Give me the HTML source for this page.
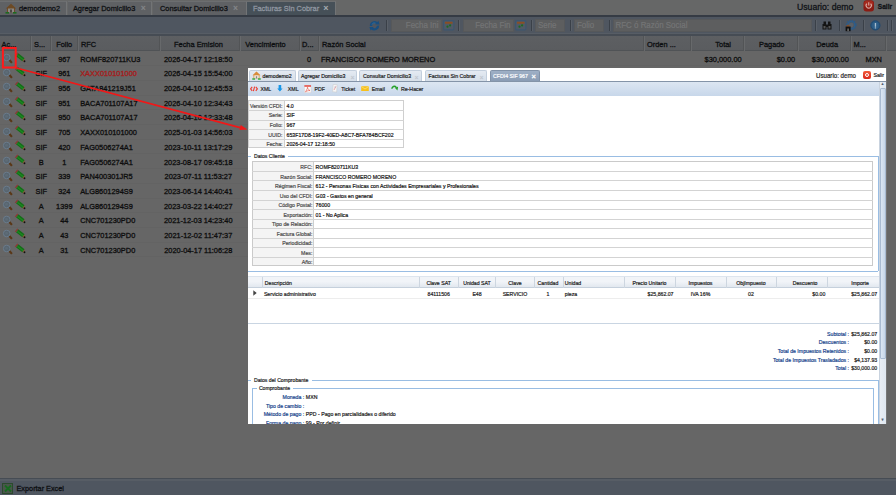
<!DOCTYPE html><html><head><meta charset="utf-8"><style>
html,body{margin:0;padding:0;width:896px;height:495px;overflow:hidden;background:#666;}
body{position:relative;font-family:"Liberation Sans", sans-serif;}
div{position:absolute;}
.t{white-space:nowrap;}
</style></head><body>
<div style="left:0px;top:0px;width:896px;height:14.6px;background:#666767;"></div>
<div style="left:0px;top:14.6px;width:896px;height:2px;background:#353b44;"></div>
<div style="left:0px;top:0.5px;width:66.5px;height:14.1px;background:#5f6164;border-right:1.4px solid #727476;border-top:0.6px solid #6c6e70;box-sizing:border-box;"></div>
<div style="left:67.5px;top:0.5px;width:84.5px;height:14.1px;background:#5f6164;border-right:1.4px solid #727476;border-top:0.6px solid #6c6e70;box-sizing:border-box;"></div>
<div style="left:153px;top:0.5px;width:93.5px;height:14.1px;background:#5f6164;border-right:1.4px solid #727476;border-top:0.6px solid #6c6e70;box-sizing:border-box;"></div>
<div style="left:247px;top:0.5px;width:89px;height:14.1px;background:#465058;border-right:1.4px solid #727476;border-top:0.6px solid #6c6e70;box-sizing:border-box;"></div>
<div style="left:0px;top:16.6px;width:896px;height:16.4px;background:#4f5660;"></div>
<div style="left:0px;top:33px;width:896px;height:1px;background:#575d65;"></div>
<div style="left:0px;top:34px;width:896px;height:1.5px;background:#464c54;"></div>
<div style="left:0px;top:35.5px;width:896px;height:15px;background:linear-gradient(#5d5f62,#5a5c5f);"></div>
<div style="left:0px;top:50.3px;width:896px;height:0.8px;background:#505356;"></div>
<div style="left:0px;top:51px;width:896px;height:426.5px;background:#666;"></div>
<div style="left:0px;top:477.6px;width:896px;height:1.2px;background:#464c54;"></div>
<div style="left:0px;top:478.8px;width:896px;height:2.6px;background:#575d65;"></div>
<div style="left:0px;top:481.4px;width:896px;height:13.6px;background:#4f5660;"></div>
<div class="t" style="top:4.80px;font-size:7.4px;line-height:7.4px;color:#0f1114;font-weight:normal;-webkit-text-stroke:0.28px currentColor;transform:scaleY(1.08);transform-origin:50% 50%;left:19px;">demodemo2</div>
<div class="t" style="top:4.80px;font-size:7.4px;line-height:7.4px;color:#0f1114;font-weight:normal;-webkit-text-stroke:0.28px currentColor;transform:scaleY(1.08);transform-origin:50% 50%;left:72.9px;">Agregar Domicilio3</div>
<div class="t" style="top:4.25px;font-size:8.5px;line-height:8.5px;color:#85878a;font-weight:normal;-webkit-text-stroke:0.28px currentColor;transform:scaleY(1.08);transform-origin:50% 50%;left:140.7px;">&#215;</div>
<div class="t" style="top:4.80px;font-size:7.4px;line-height:7.4px;color:#0f1114;font-weight:normal;-webkit-text-stroke:0.28px currentColor;transform:scaleY(1.08);transform-origin:50% 50%;left:160px;">Consultar Domicilio3</div>
<div class="t" style="top:4.25px;font-size:8.5px;line-height:8.5px;color:#85878a;font-weight:normal;-webkit-text-stroke:0.28px currentColor;transform:scaleY(1.08);transform-origin:50% 50%;left:233px;">&#215;</div>
<div class="t" style="top:4.80px;font-size:7.4px;line-height:7.4px;color:#8f96a0;font-weight:normal;-webkit-text-stroke:0.28px currentColor;transform:scaleY(1.08);transform-origin:50% 50%;left:253px;">Facturas Sin Cobrar</div>
<div class="t" style="top:4.00px;font-size:9px;line-height:9px;color:#a6acb3;font-weight:normal;-webkit-text-stroke:0.28px currentColor;transform:scaleY(1.08);transform-origin:50% 50%;left:323.3px;">&#215;</div>
<svg style="position:absolute;left:4.5px;top:2.5px" width="12" height="11" viewBox="0 0 12 11"><path d="M6 0.8 L0.8 5.6 L2 5.6 L2 9.5 L10 9.5 L10 5.6 L11.2 5.6 Z" fill="#6d4a24"/><rect x="3" y="5.5" width="6" height="4" fill="#8a8783"/><rect x="5" y="6.5" width="2" height="3" fill="#4a4643"/><rect x="0.5" y="9" width="3.5" height="1.6" fill="#1e6a20"/><rect x="8" y="9" width="3.5" height="1.6" fill="#1e6a20"/></svg>
<div class="t" style="top:2.67px;font-size:8.67px;line-height:8.67px;color:#101317;font-weight:normal;-webkit-text-stroke:0.28px currentColor;transform:scaleY(1.08);transform-origin:50% 50%;left:797px;">Usuario: demo</div>
<svg style="position:absolute;left:862.5px;top:0px" width="11.5" height="12" viewBox="0 0 11.5 12"><rect x="0.5" y="0.3" width="10.5" height="11.3" rx="3" fill="#8a1c14"/><rect x="1.2" y="0.8" width="9" height="6" rx="2.5" fill="#a42a1e"/><path d="M3.9 3.6 A2.6 2.6 0 1 0 7.6 3.6" stroke="#d8a8a0" stroke-width="1.1" fill="none"/><path d="M5.75 2.3 V5.6" stroke="#d8a8a0" stroke-width="1.1"/></svg>
<div class="t" style="top:3.70px;font-size:6.6px;line-height:6.6px;color:#101317;font-weight:bold;-webkit-text-stroke:0.28px currentColor;transform:scaleY(1.08);transform-origin:50% 50%;left:877.8px;">Salir</div>
<svg style="position:absolute;left:368.5px;top:19.5px" width="11" height="11" viewBox="0 0 11 11"><path d="M2 6 A3.6 3.6 0 0 1 8.2 3.3" stroke="#1a4f80" stroke-width="2.3" fill="none"/><path d="M6.3 4.6 L10.6 4.6 L9.4 0.8Z" fill="#1a4f80"/><path d="M9 5.6 A3.6 3.6 0 0 1 2.8 8.2" stroke="#1a4f80" stroke-width="2.3" fill="none"/><path d="M4.7 7 L0.4 7 L1.6 10.4Z" fill="#1a4f80"/><path d="M3 4.6 A2.6 2.6 0 0 1 6.4 3" stroke="#3a78a8" stroke-width="0.6" fill="none"/></svg>
<div style="left:385.5px;top:20px;width:1px;height:11px;background:#3a4048;border-right:0.6px solid #5a6068;"></div>
<div style="left:390.5px;top:19px;width:51.0px;height:13px;background:#5d5e5f;border:1px solid #56585a;box-sizing:border-box;"></div>
<div class="t" style="top:21.72px;font-size:7.95px;line-height:7.95px;color:#747576;font-weight:normal;-webkit-text-stroke:0.28px currentColor;transform:scaleY(1.08);transform-origin:50% 50%;right:457.5px;text-align:right;-webkit-text-stroke:0.2px #747576;">Fecha Ini</div>
<svg style="position:absolute;left:443.0px;top:20px" width="11.5" height="10.5" viewBox="0 0 11.5 10.5"><rect x="0.6" y="0.6" width="10.3" height="9.3" rx="1.2" fill="#505a66" stroke="#3c5670" stroke-width="1.1"/><rect x="2" y="1.8" width="7.5" height="1.9" fill="#8a4e24"/><circle cx="4.5" cy="6.7" r="1.1" fill="#1d6a22"/><circle cx="7.1" cy="5.4" r="1.1" fill="#1d6a22"/></svg>
<div style="left:458px;top:20px;width:1px;height:11px;background:#3a4048;border-right:0.6px solid #5a6068;"></div>
<div style="left:463px;top:19px;width:50.5px;height:13px;background:#5d5e5f;border:1px solid #56585a;box-sizing:border-box;"></div>
<div class="t" style="top:21.72px;font-size:7.95px;line-height:7.95px;color:#747576;font-weight:normal;-webkit-text-stroke:0.28px currentColor;transform:scaleY(1.08);transform-origin:50% 50%;right:385.5px;text-align:right;-webkit-text-stroke:0.2px #747576;">Fecha Fin</div>
<svg style="position:absolute;left:515.0px;top:20px" width="11.5" height="10.5" viewBox="0 0 11.5 10.5"><rect x="0.6" y="0.6" width="10.3" height="9.3" rx="1.2" fill="#505a66" stroke="#3c5670" stroke-width="1.1"/><rect x="2" y="1.8" width="7.5" height="1.9" fill="#8a4e24"/><circle cx="4.5" cy="6.7" r="1.1" fill="#1d6a22"/><circle cx="7.1" cy="5.4" r="1.1" fill="#1d6a22"/></svg>
<div style="left:530.5px;top:20px;width:1px;height:11px;background:#3a4048;border-right:0.6px solid #5a6068;"></div>
<div style="left:535px;top:19px;width:30px;height:13px;background:#5d5e5f;border:1px solid #56585a;box-sizing:border-box;"></div>
<div class="t" style="top:21.72px;font-size:7.95px;line-height:7.95px;color:#747576;font-weight:normal;-webkit-text-stroke:0.28px currentColor;transform:scaleY(1.08);transform-origin:50% 50%;left:538px;-webkit-text-stroke:0.2px #747576;">Serie</div>
<div style="left:570px;top:20px;width:1px;height:11px;background:#3a4048;border-right:0.6px solid #5a6068;"></div>
<div style="left:574px;top:19px;width:29.5px;height:13px;background:#5d5e5f;border:1px solid #56585a;box-sizing:border-box;"></div>
<div class="t" style="top:21.72px;font-size:7.95px;line-height:7.95px;color:#747576;font-weight:normal;-webkit-text-stroke:0.28px currentColor;transform:scaleY(1.08);transform-origin:50% 50%;left:577px;-webkit-text-stroke:0.2px #747576;">Folio</div>
<div style="left:608.5px;top:20px;width:1px;height:11px;background:#3a4048;border-right:0.6px solid #5a6068;"></div>
<div style="left:612.5px;top:19px;width:199.0px;height:13px;background:#5d5e5f;border:1px solid #56585a;box-sizing:border-box;"></div>
<div class="t" style="top:21.72px;font-size:7.95px;line-height:7.95px;color:#747576;font-weight:normal;-webkit-text-stroke:0.28px currentColor;transform:scaleY(1.08);transform-origin:50% 50%;left:615.5px;-webkit-text-stroke:0.2px #747576;">RFC &#243; Raz&#243;n Social</div>
<div style="left:814.5px;top:20px;width:1px;height:11px;background:#3a4048;border-right:0.6px solid #5a6068;"></div>
<svg style="position:absolute;left:822px;top:21px" width="10" height="9" viewBox="0 0 10 9"><rect x="0.5" y="3" width="4" height="5.5" fill="#141414"/><rect x="5.5" y="3" width="4" height="5.5" fill="#141414"/><rect x="1.5" y="0.5" width="2.5" height="3" fill="#141414"/><rect x="6" y="0.5" width="2.5" height="3" fill="#141414"/><rect x="4" y="4" width="2" height="2" fill="#141414"/><rect x="1.5" y="5" width="2" height="2.5" fill="#555"/><rect x="6.5" y="5" width="2" height="2.5" fill="#555"/></svg>
<div style="left:838.5px;top:20px;width:1px;height:11px;background:#3a4048;border-right:0.6px solid #5a6068;"></div>
<svg style="position:absolute;left:844px;top:18.5px" width="14" height="14" viewBox="0 0 14 14"><circle cx="7.3" cy="6" r="4.6" fill="none" stroke="#2b5a88" stroke-width="1.6" stroke-dasharray="1.3 1.1"/><circle cx="7.3" cy="6" r="3.4" fill="none" stroke="#2e5d8a" stroke-width="1.4"/><circle cx="7.3" cy="6" r="2.2" fill="#5a6068"/><path d="M1.3 7.8 L4 5.6 L6.8 7.8 Z" fill="#8a4e22"/><rect x="1.6" y="7.6" width="5" height="4.6" fill="#101010"/><rect x="3.3" y="9.5" width="1.6" height="2.7" fill="#6a6a6a"/></svg>
<div style="left:862.5px;top:20px;width:1px;height:11px;background:#3a4048;border-right:0.6px solid #5a6068;"></div>
<svg style="position:absolute;left:869.5px;top:19.5px" width="11" height="11" viewBox="0 0 11 11"><circle cx="5.4" cy="5.4" r="4.6" fill="#2a5880" stroke="#1d4870" stroke-width="1"/><circle cx="5.4" cy="5.4" r="3.2" fill="#2f5f88"/><rect x="4.8" y="3" width="1.3" height="3.8" fill="#a8bccd"/><rect x="4.8" y="7.3" width="1.3" height="1.2" fill="#a8bccd"/></svg>
<div style="left:886.5px;top:20px;width:1px;height:11px;background:#3a4048;border-right:0.6px solid #5a6068;"></div>
<div style="left:890.5px;top:20px;width:1px;height:11px;background:#3a4048;border-right:0.6px solid #5a6068;"></div>
<div style="left:30.2px;top:36px;width:1px;height:14.5px;background:#525456;border-right:1px solid #67696b;"></div>
<div style="left:50.3px;top:36px;width:1px;height:14.5px;background:#525456;border-right:1px solid #67696b;"></div>
<div style="left:77.1px;top:36px;width:1px;height:14.5px;background:#525456;border-right:1px solid #67696b;"></div>
<div style="left:158.5px;top:36px;width:1px;height:14.5px;background:#525456;border-right:1px solid #67696b;"></div>
<div style="left:238.8px;top:36px;width:1px;height:14.5px;background:#525456;border-right:1px solid #67696b;"></div>
<div style="left:299.1px;top:36px;width:1px;height:14.5px;background:#525456;border-right:1px solid #67696b;"></div>
<div style="left:318.1px;top:36px;width:1px;height:14.5px;background:#525456;border-right:1px solid #67696b;"></div>
<div style="left:642.6px;top:36px;width:1px;height:14.5px;background:#525456;border-right:1px solid #67696b;"></div>
<div style="left:689.7px;top:36px;width:1px;height:14.5px;background:#525456;border-right:1px solid #67696b;"></div>
<div style="left:743.3px;top:36px;width:1px;height:14.5px;background:#525456;border-right:1px solid #67696b;"></div>
<div style="left:796.6px;top:36px;width:1px;height:14.5px;background:#525456;border-right:1px solid #67696b;"></div>
<div style="left:849.9px;top:36px;width:1px;height:14.5px;background:#525456;border-right:1px solid #67696b;"></div>
<div style="left:884.6px;top:36px;width:1px;height:14.5px;background:#525456;border-right:1px solid #67696b;"></div>
<div class="t" style="top:40.79px;font-size:7.42px;line-height:7.42px;color:#0c0e10;font-weight:normal;-webkit-text-stroke:0.28px currentColor;transform:scaleY(1.08);transform-origin:50% 50%;left:1.5px;">Ac...</div>
<div class="t" style="top:40.79px;font-size:7.42px;line-height:7.42px;color:#0c0e10;font-weight:normal;-webkit-text-stroke:0.28px currentColor;transform:scaleY(1.08);transform-origin:50% 50%;left:34px;">S...</div>
<div class="t" style="top:40.79px;font-size:7.42px;line-height:7.42px;color:#0c0e10;font-weight:normal;-webkit-text-stroke:0.28px currentColor;transform:scaleY(1.08);transform-origin:50% 50%;left:-85.8px;width:300px;text-align:center;">Folio</div>
<div class="t" style="top:40.79px;font-size:7.42px;line-height:7.42px;color:#0c0e10;font-weight:normal;-webkit-text-stroke:0.28px currentColor;transform:scaleY(1.08);transform-origin:50% 50%;left:81px;">RFC</div>
<div class="t" style="top:40.79px;font-size:7.42px;line-height:7.42px;color:#0c0e10;font-weight:normal;-webkit-text-stroke:0.28px currentColor;transform:scaleY(1.08);transform-origin:50% 50%;left:48.5px;width:300px;text-align:center;">Fecha Emision</div>
<div class="t" style="top:40.79px;font-size:7.42px;line-height:7.42px;color:#0c0e10;font-weight:normal;-webkit-text-stroke:0.28px currentColor;transform:scaleY(1.08);transform-origin:50% 50%;left:115.5px;width:300px;text-align:center;">Vencimiento</div>
<div class="t" style="top:40.79px;font-size:7.42px;line-height:7.42px;color:#0c0e10;font-weight:normal;-webkit-text-stroke:0.28px currentColor;transform:scaleY(1.08);transform-origin:50% 50%;left:302px;">D...</div>
<div class="t" style="top:40.79px;font-size:7.42px;line-height:7.42px;color:#0c0e10;font-weight:normal;-webkit-text-stroke:0.28px currentColor;transform:scaleY(1.08);transform-origin:50% 50%;left:322px;">Raz&#243;n Social</div>
<div class="t" style="top:40.79px;font-size:7.42px;line-height:7.42px;color:#0c0e10;font-weight:normal;-webkit-text-stroke:0.28px currentColor;transform:scaleY(1.08);transform-origin:50% 50%;left:647px;">Orden ...</div>
<div class="t" style="top:40.79px;font-size:7.42px;line-height:7.42px;color:#0c0e10;font-weight:normal;-webkit-text-stroke:0.28px currentColor;transform:scaleY(1.08);transform-origin:50% 50%;right:165px;text-align:right;">Total</div>
<div class="t" style="top:40.79px;font-size:7.42px;line-height:7.42px;color:#0c0e10;font-weight:normal;-webkit-text-stroke:0.28px currentColor;transform:scaleY(1.08);transform-origin:50% 50%;right:111.5px;text-align:right;">Pagado</div>
<div class="t" style="top:40.79px;font-size:7.42px;line-height:7.42px;color:#0c0e10;font-weight:normal;-webkit-text-stroke:0.28px currentColor;transform:scaleY(1.08);transform-origin:50% 50%;right:58px;text-align:right;">Deuda</div>
<div class="t" style="top:40.79px;font-size:7.42px;line-height:7.42px;color:#0c0e10;font-weight:normal;-webkit-text-stroke:0.28px currentColor;transform:scaleY(1.08);transform-origin:50% 50%;left:853.5px;">M...</div>
<div style="left:0px;top:65.2px;width:884.4px;height:0.7px;background:#636363;"></div>
<svg style="position:absolute;left:2px;top:51.00px" width="12" height="14" viewBox="0 0 12 14"><path d="M7.4 9 L9.4 11.2" stroke="#5a3818" stroke-width="2.1" stroke-linecap="round"/><circle cx="4.7" cy="6.5" r="3.3" fill="#58656f" stroke="#6a7b8c" stroke-width="1"/><circle cx="4.5" cy="6.3" r="1.5" fill="#5e6c78"/></svg>
<svg style="position:absolute;left:14.2px;top:51.50px" width="14" height="12" viewBox="0 0 14 12"><path d="M2.0 4.3 L4.3 1.3 L10.6 6.2 L8.3 9.2Z" fill="#146e18"/><path d="M3.3 3.2 L9.3 7.8" stroke="#1d8a21" stroke-width="1.1"/><path d="M0.9 3.4 L3.2 0.4 L4.3 1.3 L2.0 4.3Z" fill="#8a3a36"/><path d="M10.6 6.2 L8.3 9.2 L10.9 9.6Z" fill="#8a5e36"/><circle cx="10.5" cy="9.2" r="0.95" fill="#111"/></svg>
<div class="t" style="top:55.60px;font-size:7.4px;line-height:7.4px;color:#0d0d0d;font-weight:normal;-webkit-text-stroke:0.28px currentColor;transform:scaleY(1.08);transform-origin:50% 50%;left:-108.8px;width:300px;text-align:center;">SIF</div>
<div class="t" style="top:55.60px;font-size:7.4px;line-height:7.4px;color:#0d0d0d;font-weight:normal;-webkit-text-stroke:0.28px currentColor;transform:scaleY(1.08);transform-origin:50% 50%;left:-85.7px;width:300px;text-align:center;">967</div>
<div class="t" style="top:55.60px;font-size:7.4px;line-height:7.4px;color:#0d0d0d;font-weight:normal;-webkit-text-stroke:0.28px currentColor;transform:scaleY(1.08);transform-origin:50% 50%;left:80.2px;">ROMF820711KU3</div>
<div class="t" style="top:55.60px;font-size:7.4px;line-height:7.4px;color:#0d0d0d;font-weight:normal;-webkit-text-stroke:0.28px currentColor;transform:scaleY(1.08);transform-origin:50% 50%;left:48.30000000000001px;width:300px;text-align:center;">2026-04-17 12:18:50</div>
<div class="t" style="top:55.60px;font-size:7.4px;line-height:7.4px;color:#0d0d0d;font-weight:normal;-webkit-text-stroke:0.28px currentColor;transform:scaleY(1.08);transform-origin:50% 50%;left:159px;width:300px;text-align:center;">0</div>
<div class="t" style="top:55.60px;font-size:7.4px;line-height:7.4px;color:#0d0d0d;font-weight:normal;-webkit-text-stroke:0.28px currentColor;transform:scaleY(1.08);transform-origin:50% 50%;left:321px;">FRANCISCO ROMERO MORENO</div>
<div class="t" style="top:55.60px;font-size:7.4px;line-height:7.4px;color:#0d0d0d;font-weight:normal;-webkit-text-stroke:0.28px currentColor;transform:scaleY(1.08);transform-origin:50% 50%;right:154.39999999999998px;text-align:right;">$30,000.00</div>
<div class="t" style="top:55.60px;font-size:7.4px;line-height:7.4px;color:#0d0d0d;font-weight:normal;-webkit-text-stroke:0.28px currentColor;transform:scaleY(1.08);transform-origin:50% 50%;right:100.79999999999995px;text-align:right;">$0.00</div>
<div class="t" style="top:55.60px;font-size:7.4px;line-height:7.4px;color:#0d0d0d;font-weight:normal;-webkit-text-stroke:0.28px currentColor;transform:scaleY(1.08);transform-origin:50% 50%;right:47.200000000000045px;text-align:right;">$30,000.00</div>
<div class="t" style="top:55.60px;font-size:7.4px;line-height:7.4px;color:#0d0d0d;font-weight:normal;-webkit-text-stroke:0.28px currentColor;transform:scaleY(1.08);transform-origin:50% 50%;left:865.5px;">MXN</div>
<div style="left:0px;top:79.9px;width:884.4px;height:0.7px;background:#636363;"></div>
<svg style="position:absolute;left:2px;top:65.70px" width="12" height="14" viewBox="0 0 12 14"><path d="M7.4 9 L9.4 11.2" stroke="#5a3818" stroke-width="2.1" stroke-linecap="round"/><circle cx="4.7" cy="6.5" r="3.3" fill="#58656f" stroke="#6a7b8c" stroke-width="1"/><circle cx="4.5" cy="6.3" r="1.5" fill="#5e6c78"/></svg>
<svg style="position:absolute;left:14.2px;top:66.20px" width="14" height="12" viewBox="0 0 14 12"><path d="M2.0 4.3 L4.3 1.3 L10.6 6.2 L8.3 9.2Z" fill="#146e18"/><path d="M3.3 3.2 L9.3 7.8" stroke="#1d8a21" stroke-width="1.1"/><path d="M0.9 3.4 L3.2 0.4 L4.3 1.3 L2.0 4.3Z" fill="#8a3a36"/><path d="M10.6 6.2 L8.3 9.2 L10.9 9.6Z" fill="#8a5e36"/><circle cx="10.5" cy="9.2" r="0.95" fill="#111"/></svg>
<div class="t" style="top:70.30px;font-size:7.4px;line-height:7.4px;color:#0d0d0d;font-weight:normal;-webkit-text-stroke:0.28px currentColor;transform:scaleY(1.08);transform-origin:50% 50%;left:-108.8px;width:300px;text-align:center;">SIF</div>
<div class="t" style="top:70.30px;font-size:7.4px;line-height:7.4px;color:#0d0d0d;font-weight:normal;-webkit-text-stroke:0.28px currentColor;transform:scaleY(1.08);transform-origin:50% 50%;left:-85.7px;width:300px;text-align:center;">961</div>
<div class="t" style="top:70.30px;font-size:7.4px;line-height:7.4px;color:#a81a1a;font-weight:normal;-webkit-text-stroke:0.28px currentColor;transform:scaleY(1.08);transform-origin:50% 50%;left:80.2px;">XAXX010101000</div>
<div class="t" style="top:70.30px;font-size:7.4px;line-height:7.4px;color:#0d0d0d;font-weight:normal;-webkit-text-stroke:0.28px currentColor;transform:scaleY(1.08);transform-origin:50% 50%;left:48.30000000000001px;width:300px;text-align:center;">2026-04-15 15:54:00</div>
<div style="left:0px;top:94.60000000000001px;width:884.4px;height:0.7px;background:#636363;"></div>
<svg style="position:absolute;left:2px;top:80.40px" width="12" height="14" viewBox="0 0 12 14"><path d="M7.4 9 L9.4 11.2" stroke="#5a3818" stroke-width="2.1" stroke-linecap="round"/><circle cx="4.7" cy="6.5" r="3.3" fill="#58656f" stroke="#6a7b8c" stroke-width="1"/><circle cx="4.5" cy="6.3" r="1.5" fill="#5e6c78"/></svg>
<svg style="position:absolute;left:14.2px;top:80.90px" width="14" height="12" viewBox="0 0 14 12"><path d="M2.0 4.3 L4.3 1.3 L10.6 6.2 L8.3 9.2Z" fill="#146e18"/><path d="M3.3 3.2 L9.3 7.8" stroke="#1d8a21" stroke-width="1.1"/><path d="M0.9 3.4 L3.2 0.4 L4.3 1.3 L2.0 4.3Z" fill="#8a3a36"/><path d="M10.6 6.2 L8.3 9.2 L10.9 9.6Z" fill="#8a5e36"/><circle cx="10.5" cy="9.2" r="0.95" fill="#111"/></svg>
<div class="t" style="top:85.00px;font-size:7.4px;line-height:7.4px;color:#0d0d0d;font-weight:normal;-webkit-text-stroke:0.28px currentColor;transform:scaleY(1.08);transform-origin:50% 50%;left:-108.8px;width:300px;text-align:center;">SIF</div>
<div class="t" style="top:85.00px;font-size:7.4px;line-height:7.4px;color:#0d0d0d;font-weight:normal;-webkit-text-stroke:0.28px currentColor;transform:scaleY(1.08);transform-origin:50% 50%;left:-85.7px;width:300px;text-align:center;">956</div>
<div class="t" style="top:85.00px;font-size:7.4px;line-height:7.4px;color:#0d0d0d;font-weight:normal;-webkit-text-stroke:0.28px currentColor;transform:scaleY(1.08);transform-origin:50% 50%;left:80.2px;">GATA841219J51</div>
<div class="t" style="top:85.00px;font-size:7.4px;line-height:7.4px;color:#0d0d0d;font-weight:normal;-webkit-text-stroke:0.28px currentColor;transform:scaleY(1.08);transform-origin:50% 50%;left:48.30000000000001px;width:300px;text-align:center;">2026-04-10 12:45:53</div>
<div style="left:0px;top:109.3px;width:884.4px;height:0.7px;background:#636363;"></div>
<svg style="position:absolute;left:2px;top:95.10px" width="12" height="14" viewBox="0 0 12 14"><path d="M7.4 9 L9.4 11.2" stroke="#5a3818" stroke-width="2.1" stroke-linecap="round"/><circle cx="4.7" cy="6.5" r="3.3" fill="#58656f" stroke="#6a7b8c" stroke-width="1"/><circle cx="4.5" cy="6.3" r="1.5" fill="#5e6c78"/></svg>
<svg style="position:absolute;left:14.2px;top:95.60px" width="14" height="12" viewBox="0 0 14 12"><path d="M2.0 4.3 L4.3 1.3 L10.6 6.2 L8.3 9.2Z" fill="#146e18"/><path d="M3.3 3.2 L9.3 7.8" stroke="#1d8a21" stroke-width="1.1"/><path d="M0.9 3.4 L3.2 0.4 L4.3 1.3 L2.0 4.3Z" fill="#8a3a36"/><path d="M10.6 6.2 L8.3 9.2 L10.9 9.6Z" fill="#8a5e36"/><circle cx="10.5" cy="9.2" r="0.95" fill="#111"/></svg>
<div class="t" style="top:99.70px;font-size:7.4px;line-height:7.4px;color:#0d0d0d;font-weight:normal;-webkit-text-stroke:0.28px currentColor;transform:scaleY(1.08);transform-origin:50% 50%;left:-108.8px;width:300px;text-align:center;">SIF</div>
<div class="t" style="top:99.70px;font-size:7.4px;line-height:7.4px;color:#0d0d0d;font-weight:normal;-webkit-text-stroke:0.28px currentColor;transform:scaleY(1.08);transform-origin:50% 50%;left:-85.7px;width:300px;text-align:center;">951</div>
<div class="t" style="top:99.70px;font-size:7.4px;line-height:7.4px;color:#0d0d0d;font-weight:normal;-webkit-text-stroke:0.28px currentColor;transform:scaleY(1.08);transform-origin:50% 50%;left:80.2px;">BACA701107A17</div>
<div class="t" style="top:99.70px;font-size:7.4px;line-height:7.4px;color:#0d0d0d;font-weight:normal;-webkit-text-stroke:0.28px currentColor;transform:scaleY(1.08);transform-origin:50% 50%;left:48.30000000000001px;width:300px;text-align:center;">2026-04-10 12:34:43</div>
<div style="left:0px;top:124.0px;width:884.4px;height:0.7px;background:#636363;"></div>
<svg style="position:absolute;left:2px;top:109.80px" width="12" height="14" viewBox="0 0 12 14"><path d="M7.4 9 L9.4 11.2" stroke="#5a3818" stroke-width="2.1" stroke-linecap="round"/><circle cx="4.7" cy="6.5" r="3.3" fill="#58656f" stroke="#6a7b8c" stroke-width="1"/><circle cx="4.5" cy="6.3" r="1.5" fill="#5e6c78"/></svg>
<svg style="position:absolute;left:14.2px;top:110.30px" width="14" height="12" viewBox="0 0 14 12"><path d="M2.0 4.3 L4.3 1.3 L10.6 6.2 L8.3 9.2Z" fill="#146e18"/><path d="M3.3 3.2 L9.3 7.8" stroke="#1d8a21" stroke-width="1.1"/><path d="M0.9 3.4 L3.2 0.4 L4.3 1.3 L2.0 4.3Z" fill="#8a3a36"/><path d="M10.6 6.2 L8.3 9.2 L10.9 9.6Z" fill="#8a5e36"/><circle cx="10.5" cy="9.2" r="0.95" fill="#111"/></svg>
<div class="t" style="top:114.40px;font-size:7.4px;line-height:7.4px;color:#0d0d0d;font-weight:normal;-webkit-text-stroke:0.28px currentColor;transform:scaleY(1.08);transform-origin:50% 50%;left:-108.8px;width:300px;text-align:center;">SIF</div>
<div class="t" style="top:114.40px;font-size:7.4px;line-height:7.4px;color:#0d0d0d;font-weight:normal;-webkit-text-stroke:0.28px currentColor;transform:scaleY(1.08);transform-origin:50% 50%;left:-85.7px;width:300px;text-align:center;">950</div>
<div class="t" style="top:114.40px;font-size:7.4px;line-height:7.4px;color:#0d0d0d;font-weight:normal;-webkit-text-stroke:0.28px currentColor;transform:scaleY(1.08);transform-origin:50% 50%;left:80.2px;">BACA701107A17</div>
<div class="t" style="top:114.40px;font-size:7.4px;line-height:7.4px;color:#0d0d0d;font-weight:normal;-webkit-text-stroke:0.28px currentColor;transform:scaleY(1.08);transform-origin:50% 50%;left:48.30000000000001px;width:300px;text-align:center;">2026-04-10 12:33:48</div>
<div style="left:0px;top:138.7px;width:884.4px;height:0.7px;background:#636363;"></div>
<svg style="position:absolute;left:2px;top:124.50px" width="12" height="14" viewBox="0 0 12 14"><path d="M7.4 9 L9.4 11.2" stroke="#5a3818" stroke-width="2.1" stroke-linecap="round"/><circle cx="4.7" cy="6.5" r="3.3" fill="#58656f" stroke="#6a7b8c" stroke-width="1"/><circle cx="4.5" cy="6.3" r="1.5" fill="#5e6c78"/></svg>
<svg style="position:absolute;left:14.2px;top:125.00px" width="14" height="12" viewBox="0 0 14 12"><path d="M2.0 4.3 L4.3 1.3 L10.6 6.2 L8.3 9.2Z" fill="#146e18"/><path d="M3.3 3.2 L9.3 7.8" stroke="#1d8a21" stroke-width="1.1"/><path d="M0.9 3.4 L3.2 0.4 L4.3 1.3 L2.0 4.3Z" fill="#8a3a36"/><path d="M10.6 6.2 L8.3 9.2 L10.9 9.6Z" fill="#8a5e36"/><circle cx="10.5" cy="9.2" r="0.95" fill="#111"/></svg>
<div class="t" style="top:129.10px;font-size:7.4px;line-height:7.4px;color:#0d0d0d;font-weight:normal;-webkit-text-stroke:0.28px currentColor;transform:scaleY(1.08);transform-origin:50% 50%;left:-108.8px;width:300px;text-align:center;">SIF</div>
<div class="t" style="top:129.10px;font-size:7.4px;line-height:7.4px;color:#0d0d0d;font-weight:normal;-webkit-text-stroke:0.28px currentColor;transform:scaleY(1.08);transform-origin:50% 50%;left:-85.7px;width:300px;text-align:center;">705</div>
<div class="t" style="top:129.10px;font-size:7.4px;line-height:7.4px;color:#0d0d0d;font-weight:normal;-webkit-text-stroke:0.28px currentColor;transform:scaleY(1.08);transform-origin:50% 50%;left:80.2px;">XAXX010101000</div>
<div class="t" style="top:129.10px;font-size:7.4px;line-height:7.4px;color:#0d0d0d;font-weight:normal;-webkit-text-stroke:0.28px currentColor;transform:scaleY(1.08);transform-origin:50% 50%;left:48.30000000000001px;width:300px;text-align:center;">2025-01-03 14:56:03</div>
<div style="left:0px;top:153.39999999999998px;width:884.4px;height:0.7px;background:#636363;"></div>
<svg style="position:absolute;left:2px;top:139.20px" width="12" height="14" viewBox="0 0 12 14"><path d="M7.4 9 L9.4 11.2" stroke="#5a3818" stroke-width="2.1" stroke-linecap="round"/><circle cx="4.7" cy="6.5" r="3.3" fill="#58656f" stroke="#6a7b8c" stroke-width="1"/><circle cx="4.5" cy="6.3" r="1.5" fill="#5e6c78"/></svg>
<svg style="position:absolute;left:14.2px;top:139.70px" width="14" height="12" viewBox="0 0 14 12"><path d="M2.0 4.3 L4.3 1.3 L10.6 6.2 L8.3 9.2Z" fill="#146e18"/><path d="M3.3 3.2 L9.3 7.8" stroke="#1d8a21" stroke-width="1.1"/><path d="M0.9 3.4 L3.2 0.4 L4.3 1.3 L2.0 4.3Z" fill="#8a3a36"/><path d="M10.6 6.2 L8.3 9.2 L10.9 9.6Z" fill="#8a5e36"/><circle cx="10.5" cy="9.2" r="0.95" fill="#111"/></svg>
<div class="t" style="top:143.80px;font-size:7.4px;line-height:7.4px;color:#0d0d0d;font-weight:normal;-webkit-text-stroke:0.28px currentColor;transform:scaleY(1.08);transform-origin:50% 50%;left:-108.8px;width:300px;text-align:center;">SIF</div>
<div class="t" style="top:143.80px;font-size:7.4px;line-height:7.4px;color:#0d0d0d;font-weight:normal;-webkit-text-stroke:0.28px currentColor;transform:scaleY(1.08);transform-origin:50% 50%;left:-85.7px;width:300px;text-align:center;">420</div>
<div class="t" style="top:143.80px;font-size:7.4px;line-height:7.4px;color:#0d0d0d;font-weight:normal;-webkit-text-stroke:0.28px currentColor;transform:scaleY(1.08);transform-origin:50% 50%;left:80.2px;">FAG0506274A1</div>
<div class="t" style="top:143.80px;font-size:7.4px;line-height:7.4px;color:#0d0d0d;font-weight:normal;-webkit-text-stroke:0.28px currentColor;transform:scaleY(1.08);transform-origin:50% 50%;left:48.30000000000001px;width:300px;text-align:center;">2023-10-11 13:17:29</div>
<div style="left:0px;top:168.09999999999997px;width:884.4px;height:0.7px;background:#636363;"></div>
<svg style="position:absolute;left:2px;top:153.90px" width="12" height="14" viewBox="0 0 12 14"><path d="M7.4 9 L9.4 11.2" stroke="#5a3818" stroke-width="2.1" stroke-linecap="round"/><circle cx="4.7" cy="6.5" r="3.3" fill="#58656f" stroke="#6a7b8c" stroke-width="1"/><circle cx="4.5" cy="6.3" r="1.5" fill="#5e6c78"/></svg>
<svg style="position:absolute;left:14.2px;top:154.40px" width="14" height="12" viewBox="0 0 14 12"><path d="M2.0 4.3 L4.3 1.3 L10.6 6.2 L8.3 9.2Z" fill="#146e18"/><path d="M3.3 3.2 L9.3 7.8" stroke="#1d8a21" stroke-width="1.1"/><path d="M0.9 3.4 L3.2 0.4 L4.3 1.3 L2.0 4.3Z" fill="#8a3a36"/><path d="M10.6 6.2 L8.3 9.2 L10.9 9.6Z" fill="#8a5e36"/><circle cx="10.5" cy="9.2" r="0.95" fill="#111"/></svg>
<div class="t" style="top:158.50px;font-size:7.4px;line-height:7.4px;color:#0d0d0d;font-weight:normal;-webkit-text-stroke:0.28px currentColor;transform:scaleY(1.08);transform-origin:50% 50%;left:-108.8px;width:300px;text-align:center;">B</div>
<div class="t" style="top:158.50px;font-size:7.4px;line-height:7.4px;color:#0d0d0d;font-weight:normal;-webkit-text-stroke:0.28px currentColor;transform:scaleY(1.08);transform-origin:50% 50%;left:-85.7px;width:300px;text-align:center;">1</div>
<div class="t" style="top:158.50px;font-size:7.4px;line-height:7.4px;color:#0d0d0d;font-weight:normal;-webkit-text-stroke:0.28px currentColor;transform:scaleY(1.08);transform-origin:50% 50%;left:80.2px;">FAG0506274A1</div>
<div class="t" style="top:158.50px;font-size:7.4px;line-height:7.4px;color:#0d0d0d;font-weight:normal;-webkit-text-stroke:0.28px currentColor;transform:scaleY(1.08);transform-origin:50% 50%;left:48.30000000000001px;width:300px;text-align:center;">2023-08-17 09:45:18</div>
<div style="left:0px;top:182.79999999999998px;width:884.4px;height:0.7px;background:#636363;"></div>
<svg style="position:absolute;left:2px;top:168.60px" width="12" height="14" viewBox="0 0 12 14"><path d="M7.4 9 L9.4 11.2" stroke="#5a3818" stroke-width="2.1" stroke-linecap="round"/><circle cx="4.7" cy="6.5" r="3.3" fill="#58656f" stroke="#6a7b8c" stroke-width="1"/><circle cx="4.5" cy="6.3" r="1.5" fill="#5e6c78"/></svg>
<svg style="position:absolute;left:14.2px;top:169.10px" width="14" height="12" viewBox="0 0 14 12"><path d="M2.0 4.3 L4.3 1.3 L10.6 6.2 L8.3 9.2Z" fill="#146e18"/><path d="M3.3 3.2 L9.3 7.8" stroke="#1d8a21" stroke-width="1.1"/><path d="M0.9 3.4 L3.2 0.4 L4.3 1.3 L2.0 4.3Z" fill="#8a3a36"/><path d="M10.6 6.2 L8.3 9.2 L10.9 9.6Z" fill="#8a5e36"/><circle cx="10.5" cy="9.2" r="0.95" fill="#111"/></svg>
<div class="t" style="top:173.20px;font-size:7.4px;line-height:7.4px;color:#0d0d0d;font-weight:normal;-webkit-text-stroke:0.28px currentColor;transform:scaleY(1.08);transform-origin:50% 50%;left:-108.8px;width:300px;text-align:center;">SIF</div>
<div class="t" style="top:173.20px;font-size:7.4px;line-height:7.4px;color:#0d0d0d;font-weight:normal;-webkit-text-stroke:0.28px currentColor;transform:scaleY(1.08);transform-origin:50% 50%;left:-85.7px;width:300px;text-align:center;">339</div>
<div class="t" style="top:173.20px;font-size:7.4px;line-height:7.4px;color:#0d0d0d;font-weight:normal;-webkit-text-stroke:0.28px currentColor;transform:scaleY(1.08);transform-origin:50% 50%;left:80.2px;">PAN400301JR5</div>
<div class="t" style="top:173.20px;font-size:7.4px;line-height:7.4px;color:#0d0d0d;font-weight:normal;-webkit-text-stroke:0.28px currentColor;transform:scaleY(1.08);transform-origin:50% 50%;left:48.30000000000001px;width:300px;text-align:center;">2023-07-11 11:53:27</div>
<div style="left:0px;top:197.49999999999997px;width:884.4px;height:0.7px;background:#636363;"></div>
<svg style="position:absolute;left:2px;top:183.30px" width="12" height="14" viewBox="0 0 12 14"><path d="M7.4 9 L9.4 11.2" stroke="#5a3818" stroke-width="2.1" stroke-linecap="round"/><circle cx="4.7" cy="6.5" r="3.3" fill="#58656f" stroke="#6a7b8c" stroke-width="1"/><circle cx="4.5" cy="6.3" r="1.5" fill="#5e6c78"/></svg>
<svg style="position:absolute;left:14.2px;top:183.80px" width="14" height="12" viewBox="0 0 14 12"><path d="M2.0 4.3 L4.3 1.3 L10.6 6.2 L8.3 9.2Z" fill="#146e18"/><path d="M3.3 3.2 L9.3 7.8" stroke="#1d8a21" stroke-width="1.1"/><path d="M0.9 3.4 L3.2 0.4 L4.3 1.3 L2.0 4.3Z" fill="#8a3a36"/><path d="M10.6 6.2 L8.3 9.2 L10.9 9.6Z" fill="#8a5e36"/><circle cx="10.5" cy="9.2" r="0.95" fill="#111"/></svg>
<div class="t" style="top:187.90px;font-size:7.4px;line-height:7.4px;color:#0d0d0d;font-weight:normal;-webkit-text-stroke:0.28px currentColor;transform:scaleY(1.08);transform-origin:50% 50%;left:-108.8px;width:300px;text-align:center;">SIF</div>
<div class="t" style="top:187.90px;font-size:7.4px;line-height:7.4px;color:#0d0d0d;font-weight:normal;-webkit-text-stroke:0.28px currentColor;transform:scaleY(1.08);transform-origin:50% 50%;left:-85.7px;width:300px;text-align:center;">324</div>
<div class="t" style="top:187.90px;font-size:7.4px;line-height:7.4px;color:#0d0d0d;font-weight:normal;-webkit-text-stroke:0.28px currentColor;transform:scaleY(1.08);transform-origin:50% 50%;left:80.2px;">ALG8601294S9</div>
<div class="t" style="top:187.90px;font-size:7.4px;line-height:7.4px;color:#0d0d0d;font-weight:normal;-webkit-text-stroke:0.28px currentColor;transform:scaleY(1.08);transform-origin:50% 50%;left:48.30000000000001px;width:300px;text-align:center;">2023-06-14 14:40:41</div>
<div style="left:0px;top:212.2px;width:884.4px;height:0.7px;background:#636363;"></div>
<svg style="position:absolute;left:2px;top:198.00px" width="12" height="14" viewBox="0 0 12 14"><path d="M7.4 9 L9.4 11.2" stroke="#5a3818" stroke-width="2.1" stroke-linecap="round"/><circle cx="4.7" cy="6.5" r="3.3" fill="#58656f" stroke="#6a7b8c" stroke-width="1"/><circle cx="4.5" cy="6.3" r="1.5" fill="#5e6c78"/></svg>
<svg style="position:absolute;left:14.2px;top:198.50px" width="14" height="12" viewBox="0 0 14 12"><path d="M2.0 4.3 L4.3 1.3 L10.6 6.2 L8.3 9.2Z" fill="#146e18"/><path d="M3.3 3.2 L9.3 7.8" stroke="#1d8a21" stroke-width="1.1"/><path d="M0.9 3.4 L3.2 0.4 L4.3 1.3 L2.0 4.3Z" fill="#8a3a36"/><path d="M10.6 6.2 L8.3 9.2 L10.9 9.6Z" fill="#8a5e36"/><circle cx="10.5" cy="9.2" r="0.95" fill="#111"/></svg>
<div class="t" style="top:202.60px;font-size:7.4px;line-height:7.4px;color:#0d0d0d;font-weight:normal;-webkit-text-stroke:0.28px currentColor;transform:scaleY(1.08);transform-origin:50% 50%;left:-108.8px;width:300px;text-align:center;">A</div>
<div class="t" style="top:202.60px;font-size:7.4px;line-height:7.4px;color:#0d0d0d;font-weight:normal;-webkit-text-stroke:0.28px currentColor;transform:scaleY(1.08);transform-origin:50% 50%;left:-85.7px;width:300px;text-align:center;">1399</div>
<div class="t" style="top:202.60px;font-size:7.4px;line-height:7.4px;color:#0d0d0d;font-weight:normal;-webkit-text-stroke:0.28px currentColor;transform:scaleY(1.08);transform-origin:50% 50%;left:80.2px;">ALG8601294S9</div>
<div class="t" style="top:202.60px;font-size:7.4px;line-height:7.4px;color:#0d0d0d;font-weight:normal;-webkit-text-stroke:0.28px currentColor;transform:scaleY(1.08);transform-origin:50% 50%;left:48.30000000000001px;width:300px;text-align:center;">2023-03-22 14:40:27</div>
<div style="left:0px;top:226.89999999999998px;width:884.4px;height:0.7px;background:#636363;"></div>
<svg style="position:absolute;left:2px;top:212.70px" width="12" height="14" viewBox="0 0 12 14"><path d="M7.4 9 L9.4 11.2" stroke="#5a3818" stroke-width="2.1" stroke-linecap="round"/><circle cx="4.7" cy="6.5" r="3.3" fill="#58656f" stroke="#6a7b8c" stroke-width="1"/><circle cx="4.5" cy="6.3" r="1.5" fill="#5e6c78"/></svg>
<svg style="position:absolute;left:14.2px;top:213.20px" width="14" height="12" viewBox="0 0 14 12"><path d="M2.0 4.3 L4.3 1.3 L10.6 6.2 L8.3 9.2Z" fill="#146e18"/><path d="M3.3 3.2 L9.3 7.8" stroke="#1d8a21" stroke-width="1.1"/><path d="M0.9 3.4 L3.2 0.4 L4.3 1.3 L2.0 4.3Z" fill="#8a3a36"/><path d="M10.6 6.2 L8.3 9.2 L10.9 9.6Z" fill="#8a5e36"/><circle cx="10.5" cy="9.2" r="0.95" fill="#111"/></svg>
<div class="t" style="top:217.30px;font-size:7.4px;line-height:7.4px;color:#0d0d0d;font-weight:normal;-webkit-text-stroke:0.28px currentColor;transform:scaleY(1.08);transform-origin:50% 50%;left:-108.8px;width:300px;text-align:center;">A</div>
<div class="t" style="top:217.30px;font-size:7.4px;line-height:7.4px;color:#0d0d0d;font-weight:normal;-webkit-text-stroke:0.28px currentColor;transform:scaleY(1.08);transform-origin:50% 50%;left:-85.7px;width:300px;text-align:center;">44</div>
<div class="t" style="top:217.30px;font-size:7.4px;line-height:7.4px;color:#0d0d0d;font-weight:normal;-webkit-text-stroke:0.28px currentColor;transform:scaleY(1.08);transform-origin:50% 50%;left:80.2px;">CNC701230PD0</div>
<div class="t" style="top:217.30px;font-size:7.4px;line-height:7.4px;color:#0d0d0d;font-weight:normal;-webkit-text-stroke:0.28px currentColor;transform:scaleY(1.08);transform-origin:50% 50%;left:48.30000000000001px;width:300px;text-align:center;">2021-12-03 14:23:40</div>
<div style="left:0px;top:241.59999999999997px;width:884.4px;height:0.7px;background:#636363;"></div>
<svg style="position:absolute;left:2px;top:227.40px" width="12" height="14" viewBox="0 0 12 14"><path d="M7.4 9 L9.4 11.2" stroke="#5a3818" stroke-width="2.1" stroke-linecap="round"/><circle cx="4.7" cy="6.5" r="3.3" fill="#58656f" stroke="#6a7b8c" stroke-width="1"/><circle cx="4.5" cy="6.3" r="1.5" fill="#5e6c78"/></svg>
<svg style="position:absolute;left:14.2px;top:227.90px" width="14" height="12" viewBox="0 0 14 12"><path d="M2.0 4.3 L4.3 1.3 L10.6 6.2 L8.3 9.2Z" fill="#146e18"/><path d="M3.3 3.2 L9.3 7.8" stroke="#1d8a21" stroke-width="1.1"/><path d="M0.9 3.4 L3.2 0.4 L4.3 1.3 L2.0 4.3Z" fill="#8a3a36"/><path d="M10.6 6.2 L8.3 9.2 L10.9 9.6Z" fill="#8a5e36"/><circle cx="10.5" cy="9.2" r="0.95" fill="#111"/></svg>
<div class="t" style="top:232.00px;font-size:7.4px;line-height:7.4px;color:#0d0d0d;font-weight:normal;-webkit-text-stroke:0.28px currentColor;transform:scaleY(1.08);transform-origin:50% 50%;left:-108.8px;width:300px;text-align:center;">A</div>
<div class="t" style="top:232.00px;font-size:7.4px;line-height:7.4px;color:#0d0d0d;font-weight:normal;-webkit-text-stroke:0.28px currentColor;transform:scaleY(1.08);transform-origin:50% 50%;left:-85.7px;width:300px;text-align:center;">43</div>
<div class="t" style="top:232.00px;font-size:7.4px;line-height:7.4px;color:#0d0d0d;font-weight:normal;-webkit-text-stroke:0.28px currentColor;transform:scaleY(1.08);transform-origin:50% 50%;left:80.2px;">CNC701230PD0</div>
<div class="t" style="top:232.00px;font-size:7.4px;line-height:7.4px;color:#0d0d0d;font-weight:normal;-webkit-text-stroke:0.28px currentColor;transform:scaleY(1.08);transform-origin:50% 50%;left:48.30000000000001px;width:300px;text-align:center;">2021-12-02 11:47:37</div>
<div style="left:0px;top:256.3px;width:884.4px;height:0.7px;background:#636363;"></div>
<svg style="position:absolute;left:2px;top:242.10px" width="12" height="14" viewBox="0 0 12 14"><path d="M7.4 9 L9.4 11.2" stroke="#5a3818" stroke-width="2.1" stroke-linecap="round"/><circle cx="4.7" cy="6.5" r="3.3" fill="#58656f" stroke="#6a7b8c" stroke-width="1"/><circle cx="4.5" cy="6.3" r="1.5" fill="#5e6c78"/></svg>
<svg style="position:absolute;left:14.2px;top:242.60px" width="14" height="12" viewBox="0 0 14 12"><path d="M2.0 4.3 L4.3 1.3 L10.6 6.2 L8.3 9.2Z" fill="#146e18"/><path d="M3.3 3.2 L9.3 7.8" stroke="#1d8a21" stroke-width="1.1"/><path d="M0.9 3.4 L3.2 0.4 L4.3 1.3 L2.0 4.3Z" fill="#8a3a36"/><path d="M10.6 6.2 L8.3 9.2 L10.9 9.6Z" fill="#8a5e36"/><circle cx="10.5" cy="9.2" r="0.95" fill="#111"/></svg>
<div class="t" style="top:246.70px;font-size:7.4px;line-height:7.4px;color:#0d0d0d;font-weight:normal;-webkit-text-stroke:0.28px currentColor;transform:scaleY(1.08);transform-origin:50% 50%;left:-108.8px;width:300px;text-align:center;">A</div>
<div class="t" style="top:246.70px;font-size:7.4px;line-height:7.4px;color:#0d0d0d;font-weight:normal;-webkit-text-stroke:0.28px currentColor;transform:scaleY(1.08);transform-origin:50% 50%;left:-85.7px;width:300px;text-align:center;">31</div>
<div class="t" style="top:246.70px;font-size:7.4px;line-height:7.4px;color:#0d0d0d;font-weight:normal;-webkit-text-stroke:0.28px currentColor;transform:scaleY(1.08);transform-origin:50% 50%;left:80.2px;">CNC701230PD0</div>
<div class="t" style="top:246.70px;font-size:7.4px;line-height:7.4px;color:#0d0d0d;font-weight:normal;-webkit-text-stroke:0.28px currentColor;transform:scaleY(1.08);transform-origin:50% 50%;left:48.30000000000001px;width:300px;text-align:center;">2020-04-17 11:06:28</div>
<div style="left:2px;top:483.3px;width:10.5px;height:10.3px;background:#4a564c;border:1px solid #2c4a2e;box-sizing:border-box;"></div>
<svg style="position:absolute;left:3.5px;top:485px" width="8" height="7" viewBox="0 0 8 7"><path d="M1 0.5 L7 6.5 M7 0.5 L1 6.5" stroke="#176a1f" stroke-width="1.9"/></svg>
<div class="t" style="top:485.15px;font-size:7.3px;line-height:7.3px;color:#0d0f12;font-weight:normal;-webkit-text-stroke:0.28px currentColor;transform:scaleY(1.08);transform-origin:50% 50%;left:16.5px;">Exportar Excel</div>
<div style="left:248px;top:68px;width:638px;height:356px;background:#fff;"></div>
<div style="left:248px;top:81px;width:638px;height:1px;background:#8494a8;"></div>
<div style="left:249px;top:69.5px;width:46.80000000000001px;height:11.5px;background:linear-gradient(#e4eaf2,#d6dfe9);border:1px solid #c3cfdd;border-bottom:none;box-sizing:border-box;border-radius:2px 2px 0 0;"></div>
<div style="left:297.6px;top:69.5px;width:59.799999999999955px;height:11.5px;background:linear-gradient(#e4eaf2,#d6dfe9);border:1px solid #c3cfdd;border-bottom:none;box-sizing:border-box;border-radius:2px 2px 0 0;"></div>
<div style="left:359.2px;top:69.5px;width:63.30000000000001px;height:11.5px;background:linear-gradient(#e4eaf2,#d6dfe9);border:1px solid #c3cfdd;border-bottom:none;box-sizing:border-box;border-radius:2px 2px 0 0;"></div>
<div style="left:424.8px;top:69.5px;width:62.5px;height:11.5px;background:linear-gradient(#e4eaf2,#d6dfe9);border:1px solid #c3cfdd;border-bottom:none;box-sizing:border-box;border-radius:2px 2px 0 0;"></div>
<div style="left:489.5px;top:69.5px;width:50.200000000000045px;height:11.5px;background:linear-gradient(#9fb0c6,#8a9cb4);border:1px solid #8192a8;border-bottom:none;box-sizing:border-box;border-radius:2px 2px 0 0;"></div>
<div class="t" style="top:74.47px;font-size:5.25px;line-height:5.25px;color:#1a1a1a;font-weight:normal;-webkit-text-stroke:0.18px currentColor;transform:scaleY(1.08);transform-origin:50% 50%;left:262.5px;">demodemo2</div>
<svg style="position:absolute;left:251.5px;top:70.5px" width="9" height="9" viewBox="0 0 9 9"><path d="M4.5 0.5 L0.5 4.2 L1.5 4.2 L1.5 7.5 L7.5 7.5 L7.5 4.2 L8.5 4.2 Z" fill="#d98c3a"/><rect x="2.3" y="4.3" width="4.4" height="3.2" fill="#f2ede6"/><rect x="3.8" y="5.2" width="1.4" height="2.3" fill="#8a8580"/><rect x="0.3" y="7.3" width="2.8" height="1.4" fill="#2ea836"/><rect x="5.9" y="7.3" width="2.8" height="1.4" fill="#2ea836"/></svg>
<div class="t" style="top:74.47px;font-size:5.25px;line-height:5.25px;color:#1a1a1a;font-weight:normal;-webkit-text-stroke:0.18px currentColor;transform:scaleY(1.08);transform-origin:50% 50%;left:301px;">Agregar Domicilio3</div>
<div class="t" style="top:73.60px;font-size:7px;line-height:7px;color:#c0c6ce;font-weight:normal;-webkit-text-stroke:0.18px currentColor;transform:scaleY(1.08);transform-origin:50% 50%;left:350.5px;">&#215;</div>
<div class="t" style="top:74.47px;font-size:5.25px;line-height:5.25px;color:#1a1a1a;font-weight:normal;-webkit-text-stroke:0.18px currentColor;transform:scaleY(1.08);transform-origin:50% 50%;left:363px;">Consultar Domicilio3</div>
<div class="t" style="top:73.60px;font-size:7px;line-height:7px;color:#c0c6ce;font-weight:normal;-webkit-text-stroke:0.18px currentColor;transform:scaleY(1.08);transform-origin:50% 50%;left:414.5px;">&#215;</div>
<div class="t" style="top:74.47px;font-size:5.25px;line-height:5.25px;color:#1a1a1a;font-weight:normal;-webkit-text-stroke:0.18px currentColor;transform:scaleY(1.08);transform-origin:50% 50%;left:428.6px;">Facturas Sin Cobrar</div>
<div class="t" style="top:73.60px;font-size:7px;line-height:7px;color:#c0c6ce;font-weight:normal;-webkit-text-stroke:0.18px currentColor;transform:scaleY(1.08);transform-origin:50% 50%;left:479.5px;">&#215;</div>
<div class="t" style="top:74.47px;font-size:5.25px;line-height:5.25px;color:#ffffff;font-weight:normal;-webkit-text-stroke:0.18px currentColor;transform:scaleY(1.08);transform-origin:50% 50%;left:492.9px;">CFDI4 SIF 967</div>
<div class="t" style="top:73.35px;font-size:7.5px;line-height:7.5px;color:#ffffff;font-weight:bold;-webkit-text-stroke:0.18px currentColor;transform:scaleY(1.08);transform-origin:50% 50%;left:531.5px;">&#215;</div>
<div class="t" style="top:72.92px;font-size:6.15px;line-height:6.15px;color:#222;font-weight:normal;-webkit-text-stroke:0.18px currentColor;transform:scaleY(1.08);transform-origin:50% 50%;left:816px;">Usuario: demo</div>
<div style="left:862.7px;top:71px;width:8px;height:8px;border-radius:2px;background:linear-gradient(#f25a3a,#d8271b);"></div>
<div style="left:864.6px;top:72.8px;width:4.2px;height:4.2px;border-radius:50%;border:0.9px solid #fff;box-sizing:border-box;"></div>
<div class="t" style="top:73.35px;font-size:5.3px;line-height:5.3px;color:#222;font-weight:normal;-webkit-text-stroke:0.18px currentColor;transform:scaleY(1.08);transform-origin:50% 50%;left:873.4px;">Salir</div>
<div style="left:248px;top:82px;width:631.3px;height:13.6px;background:linear-gradient(#dce6f2,#c7d7ea);"></div>
<div style="left:879.3px;top:82px;width:6.7px;height:342px;background:linear-gradient(90deg,#e9eef5,#dfe7f0);border-left:1px solid #c9d3df;box-sizing:border-box;"></div>
<div style="left:879.8px;top:88px;width:5.8px;height:271px;background:linear-gradient(90deg,#dbe6f3,#c7d6e8);border:0.6px solid #a9bbd2;box-sizing:border-box;border-radius:1px;"></div>
<div class="t" style="top:83.05px;font-size:3.5px;line-height:3.5px;color:#4d5b6b;font-weight:normal;-webkit-text-stroke:0.18px currentColor;transform:scaleY(1.08);transform-origin:50% 50%;left:732.6px;width:300px;text-align:center;">&#9650;</div>
<div class="t" style="top:419.25px;font-size:3.5px;line-height:3.5px;color:#4d5b6b;font-weight:normal;-webkit-text-stroke:0.18px currentColor;transform:scaleY(1.08);transform-origin:50% 50%;left:732.6px;width:300px;text-align:center;">&#9660;</div>
<div style="left:885.7px;top:68px;width:0.6px;height:356px;background:#777;"></div>
<svg style="position:absolute;left:250px;top:85.5px" width="8" height="6" viewBox="0 0 8 6"><path d="M2.2 0.8 L0.6 2.8 L2.2 4.8 M5.8 0.8 L7.4 2.8 L5.8 4.8 M4.6 0.6 L3.4 5.2" stroke="#ee3a2c" stroke-width="1.1" fill="none"/></svg>
<div class="t" style="top:86.58px;font-size:5.25px;line-height:5.25px;color:#1f1f1f;font-weight:normal;-webkit-text-stroke:0.18px currentColor;transform:scaleY(1.08);transform-origin:50% 50%;left:260.4px;">XML</div>
<svg style="position:absolute;left:277px;top:85px" width="6" height="7" viewBox="0 0 6 7"><path d="M1.6 0 H4.2 V3.4 H5.6 L2.9 6.4 L0.2 3.4 H1.6Z" fill="#1896e6"/></svg>
<div class="t" style="top:86.58px;font-size:5.25px;line-height:5.25px;color:#1f1f1f;font-weight:normal;-webkit-text-stroke:0.18px currentColor;transform:scaleY(1.08);transform-origin:50% 50%;left:287.8px;">XML</div>
<svg style="position:absolute;left:304px;top:84.6px" width="7.5" height="8" viewBox="0 0 7.5 8"><path d="M0.4 0.3 H7 V7.7 H0.4Z" fill="#fbfbfb" stroke="#d8c8c8" stroke-width="0.5"/><rect x="0.4" y="0.3" width="6.6" height="1.4" fill="#e23a30"/><path d="M1.5 6.8 C3 4.5 3.8 2.6 3.6 2.2 C3.2 1.9 3 3.6 6 5.6 C4.5 5.4 2.8 6 1.5 6.8" stroke="#e04a3a" stroke-width="0.6" fill="none"/></svg>
<div class="t" style="top:86.58px;font-size:5.25px;line-height:5.25px;color:#1f1f1f;font-weight:normal;-webkit-text-stroke:0.18px currentColor;transform:scaleY(1.08);transform-origin:50% 50%;left:314.5px;">PDF</div>
<svg style="position:absolute;left:332px;top:84px" width="6" height="8.5" viewBox="0 0 6 8.5"><path d="M1.2 0.4 L5.2 0.8 L4.6 8.1 L0.6 7.7Z" fill="#f6f6f6" stroke="#c8c8c8" stroke-width="0.5"/><path d="M4 2.2 L2 6" stroke="#e06060" stroke-width="0.5"/><path d="M2.2 3 L3.8 3.2" stroke="#8090c0" stroke-width="0.4"/></svg>
<div class="t" style="top:86.58px;font-size:5.25px;line-height:5.25px;color:#1f1f1f;font-weight:normal;-webkit-text-stroke:0.18px currentColor;transform:scaleY(1.08);transform-origin:50% 50%;left:341.3px;">Ticket</div>
<svg style="position:absolute;left:361px;top:85.8px" width="8" height="5.5" viewBox="0 0 8 5.5"><rect x="0.2" y="0.2" width="7.6" height="5.1" fill="#f7c01c"/><path d="M0.2 0.4 L4 3 L7.8 0.4" stroke="#fce68a" stroke-width="0.7" fill="none"/></svg>
<div class="t" style="top:86.58px;font-size:5.25px;line-height:5.25px;color:#1f1f1f;font-weight:normal;-webkit-text-stroke:0.18px currentColor;transform:scaleY(1.08);transform-origin:50% 50%;left:371.7px;">Email</div>
<svg style="position:absolute;left:390.8px;top:84.5px" width="7.5" height="6.5" viewBox="0 0 7.5 6.5"><path d="M0.9 3.8 C1 1.6 3.4 0.4 5.2 2" stroke="#27a12a" stroke-width="1.5" fill="none"/><path d="M3.6 2.6 L7.2 1.8 L6.4 5.6Z" fill="#27a12a"/></svg>
<div class="t" style="top:86.58px;font-size:5.25px;line-height:5.25px;color:#1f1f1f;font-weight:normal;-webkit-text-stroke:0.18px currentColor;transform:scaleY(1.08);transform-origin:50% 50%;left:400.9px;">Re-Hacer</div>
<div style="left:248px;top:100.3px;width:36.5px;height:48.2px;background:#f4f4f4;border-right:0.7px solid #cfcfcf;box-sizing:border-box;"></div>
<div style="left:248px;top:100.3px;width:155.89999999999998px;height:48.2px;border:0.7px solid #cfcfcf;box-sizing:border-box;"></div>
<div class="t" style="top:103.79px;font-size:5.22px;line-height:5.22px;color:#4a4a4a;font-weight:normal;-webkit-text-stroke:0.18px currentColor;transform:scaleY(1.08);transform-origin:50% 50%;right:613.5px;text-align:right;">Versi&#243;n CFDI:</div>
<div class="t" style="top:103.79px;font-size:5.22px;line-height:5.22px;color:#111;font-weight:normal;-webkit-text-stroke:0.18px currentColor;transform:scaleY(1.08);transform-origin:50% 50%;left:286.5px;">4.0</div>
<div style="left:248px;top:109.94px;width:155.89999999999998px;height:0.7px;background:#d3d3d3;"></div>
<div class="t" style="top:113.43px;font-size:5.22px;line-height:5.22px;color:#4a4a4a;font-weight:normal;-webkit-text-stroke:0.18px currentColor;transform:scaleY(1.08);transform-origin:50% 50%;right:613.5px;text-align:right;">Serie:</div>
<div class="t" style="top:113.43px;font-size:5.22px;line-height:5.22px;color:#111;font-weight:normal;-webkit-text-stroke:0.18px currentColor;transform:scaleY(1.08);transform-origin:50% 50%;left:286.5px;">SIF</div>
<div style="left:248px;top:119.58px;width:155.89999999999998px;height:0.7px;background:#d3d3d3;"></div>
<div class="t" style="top:123.07px;font-size:5.22px;line-height:5.22px;color:#4a4a4a;font-weight:normal;-webkit-text-stroke:0.18px currentColor;transform:scaleY(1.08);transform-origin:50% 50%;right:613.5px;text-align:right;">Folio:</div>
<div class="t" style="top:123.07px;font-size:5.22px;line-height:5.22px;color:#111;font-weight:normal;-webkit-text-stroke:0.18px currentColor;transform:scaleY(1.08);transform-origin:50% 50%;left:286.5px;">967</div>
<div style="left:248px;top:129.22px;width:155.89999999999998px;height:0.7px;background:#d3d3d3;"></div>
<div class="t" style="top:132.71px;font-size:5.22px;line-height:5.22px;color:#4a4a4a;font-weight:normal;-webkit-text-stroke:0.18px currentColor;transform:scaleY(1.08);transform-origin:50% 50%;right:613.5px;text-align:right;">UUID:</div>
<div class="t" style="top:132.71px;font-size:5.22px;line-height:5.22px;color:#111;font-weight:normal;-webkit-text-stroke:0.18px currentColor;transform:scaleY(1.08);transform-origin:50% 50%;left:286.5px;">653F17D8-19F2-40ED-A8C7-BFA784BCF202</div>
<div style="left:248px;top:138.86px;width:155.89999999999998px;height:0.7px;background:#d3d3d3;"></div>
<div class="t" style="top:142.35px;font-size:5.22px;line-height:5.22px;color:#4a4a4a;font-weight:normal;-webkit-text-stroke:0.18px currentColor;transform:scaleY(1.08);transform-origin:50% 50%;right:613.5px;text-align:right;">Fecha:</div>
<div class="t" style="top:142.35px;font-size:5.22px;line-height:5.22px;color:#111;font-weight:normal;-webkit-text-stroke:0.18px currentColor;transform:scaleY(1.08);transform-origin:50% 50%;left:286.5px;">2026-04-17 12:18:50</div>
<div style="left:248px;top:156.2px;width:3px;height:0.8px;background:#99bde3;"></div>
<div style="left:288px;top:156.2px;width:590px;height:0.8px;background:#99bde3;"></div>
<div style="left:877.6px;top:156.2px;width:0.8px;height:115.10000000000002px;background:#99bde3;"></div>
<div style="left:248px;top:270.8px;width:630.4px;height:0.8px;background:#99bde3;"></div>
<div class="t" style="top:154.03px;font-size:5.15px;line-height:5.15px;color:#1a1a1a;font-weight:normal;-webkit-text-stroke:0.18px currentColor;transform:scaleY(1.08);transform-origin:50% 50%;left:254px;">Datos Cliente</div>
<div style="left:252.3px;top:161.4px;width:61.599999999999966px;height:104.9px;background:#f4f4f4;border-right:0.7px solid #cfcfcf;box-sizing:border-box;"></div>
<div style="left:252.3px;top:161.4px;width:620.8px;height:104.9px;border:0.8px solid #cacaca;box-sizing:border-box;"></div>
<div class="t" style="top:165.09px;font-size:5.22px;line-height:5.22px;color:#4a4a4a;font-weight:normal;-webkit-text-stroke:0.18px currentColor;transform:scaleY(1.08);transform-origin:50% 50%;right:583.6px;text-align:right;">RFC:</div>
<div class="t" style="top:165.09px;font-size:5.22px;line-height:5.22px;color:#111;font-weight:normal;-webkit-text-stroke:0.18px currentColor;transform:scaleY(1.08);transform-origin:50% 50%;left:315.6px;">ROMF820711KU3</div>
<div style="left:252.3px;top:170.93636363636364px;width:620.8px;height:0.7px;background:#d3d3d3;"></div>
<div class="t" style="top:174.63px;font-size:5.22px;line-height:5.22px;color:#4a4a4a;font-weight:normal;-webkit-text-stroke:0.18px currentColor;transform:scaleY(1.08);transform-origin:50% 50%;right:583.6px;text-align:right;">Raz&#243;n Social:</div>
<div class="t" style="top:174.63px;font-size:5.22px;line-height:5.22px;color:#111;font-weight:normal;-webkit-text-stroke:0.18px currentColor;transform:scaleY(1.08);transform-origin:50% 50%;left:315.6px;">FRANCISCO ROMERO MORENO</div>
<div style="left:252.3px;top:180.47272727272727px;width:620.8px;height:0.7px;background:#d3d3d3;"></div>
<div class="t" style="top:184.16px;font-size:5.22px;line-height:5.22px;color:#4a4a4a;font-weight:normal;-webkit-text-stroke:0.18px currentColor;transform:scaleY(1.08);transform-origin:50% 50%;right:583.6px;text-align:right;">R&#233;gimen Fiscal:</div>
<div class="t" style="top:184.16px;font-size:5.22px;line-height:5.22px;color:#111;font-weight:normal;-webkit-text-stroke:0.18px currentColor;transform:scaleY(1.08);transform-origin:50% 50%;left:315.6px;">612 - Personas F&#237;sicas con Actividades Empresariales y Profesionales</div>
<div style="left:252.3px;top:190.0090909090909px;width:620.8px;height:0.7px;background:#d3d3d3;"></div>
<div class="t" style="top:193.70px;font-size:5.22px;line-height:5.22px;color:#4a4a4a;font-weight:normal;-webkit-text-stroke:0.18px currentColor;transform:scaleY(1.08);transform-origin:50% 50%;right:583.6px;text-align:right;">Uso del CFDI:</div>
<div class="t" style="top:193.70px;font-size:5.22px;line-height:5.22px;color:#111;font-weight:normal;-webkit-text-stroke:0.18px currentColor;transform:scaleY(1.08);transform-origin:50% 50%;left:315.6px;">G03 - Gastos en general</div>
<div style="left:252.3px;top:199.54545454545456px;width:620.8px;height:0.7px;background:#d3d3d3;"></div>
<div class="t" style="top:203.24px;font-size:5.22px;line-height:5.22px;color:#4a4a4a;font-weight:normal;-webkit-text-stroke:0.18px currentColor;transform:scaleY(1.08);transform-origin:50% 50%;right:583.6px;text-align:right;">C&#243;digo Postal:</div>
<div class="t" style="top:203.24px;font-size:5.22px;line-height:5.22px;color:#111;font-weight:normal;-webkit-text-stroke:0.18px currentColor;transform:scaleY(1.08);transform-origin:50% 50%;left:315.6px;">76000</div>
<div style="left:252.3px;top:209.0818181818182px;width:620.8px;height:0.7px;background:#d3d3d3;"></div>
<div class="t" style="top:212.77px;font-size:5.22px;line-height:5.22px;color:#4a4a4a;font-weight:normal;-webkit-text-stroke:0.18px currentColor;transform:scaleY(1.08);transform-origin:50% 50%;right:583.6px;text-align:right;">Exportaci&#243;n:</div>
<div class="t" style="top:212.77px;font-size:5.22px;line-height:5.22px;color:#111;font-weight:normal;-webkit-text-stroke:0.18px currentColor;transform:scaleY(1.08);transform-origin:50% 50%;left:315.6px;">01 - No Aplica</div>
<div style="left:252.3px;top:218.61818181818182px;width:620.8px;height:0.7px;background:#d3d3d3;"></div>
<div class="t" style="top:222.31px;font-size:5.22px;line-height:5.22px;color:#4a4a4a;font-weight:normal;-webkit-text-stroke:0.18px currentColor;transform:scaleY(1.08);transform-origin:50% 50%;right:583.6px;text-align:right;">Tipo de Relaci&#243;n:</div>
<div style="left:252.3px;top:228.15454545454548px;width:620.8px;height:0.7px;background:#d3d3d3;"></div>
<div class="t" style="top:231.84px;font-size:5.22px;line-height:5.22px;color:#4a4a4a;font-weight:normal;-webkit-text-stroke:0.18px currentColor;transform:scaleY(1.08);transform-origin:50% 50%;right:583.6px;text-align:right;">Factura Global:</div>
<div style="left:252.3px;top:237.6909090909091px;width:620.8px;height:0.7px;background:#d3d3d3;"></div>
<div class="t" style="top:241.38px;font-size:5.22px;line-height:5.22px;color:#4a4a4a;font-weight:normal;-webkit-text-stroke:0.18px currentColor;transform:scaleY(1.08);transform-origin:50% 50%;right:583.6px;text-align:right;">Periodicidad:</div>
<div style="left:252.3px;top:247.22727272727275px;width:620.8px;height:0.7px;background:#d3d3d3;"></div>
<div class="t" style="top:250.92px;font-size:5.22px;line-height:5.22px;color:#4a4a4a;font-weight:normal;-webkit-text-stroke:0.18px currentColor;transform:scaleY(1.08);transform-origin:50% 50%;right:583.6px;text-align:right;">Mes:</div>
<div style="left:252.3px;top:256.76363636363635px;width:620.8px;height:0.7px;background:#d3d3d3;"></div>
<div class="t" style="top:260.45px;font-size:5.22px;line-height:5.22px;color:#4a4a4a;font-weight:normal;-webkit-text-stroke:0.18px currentColor;transform:scaleY(1.08);transform-origin:50% 50%;right:583.6px;text-align:right;">A&#241;o:</div>
<div style="left:248px;top:276.2px;width:630.6px;height:11.9px;background:linear-gradient(#f1f4f8,#f1f4f8 45%,#e2e8ef);border-top:0.7px solid #dde5ee;border-bottom:0.7px solid #c5d0dc;box-sizing:border-box;"></div>
<div style="left:262px;top:276.5px;width:0.7px;height:11.3px;background:#cdd6e0;"></div>
<div style="left:419.4px;top:276.5px;width:0.7px;height:11.3px;background:#cdd6e0;"></div>
<div style="left:457.5px;top:276.5px;width:0.7px;height:11.3px;background:#cdd6e0;"></div>
<div style="left:495.3px;top:276.5px;width:0.7px;height:11.3px;background:#cdd6e0;"></div>
<div style="left:533.7px;top:276.5px;width:0.7px;height:11.3px;background:#cdd6e0;"></div>
<div style="left:562.5px;top:276.5px;width:0.7px;height:11.3px;background:#cdd6e0;"></div>
<div style="left:624.4px;top:276.5px;width:0.7px;height:11.3px;background:#cdd6e0;"></div>
<div style="left:674.5px;top:276.5px;width:0.7px;height:11.3px;background:#cdd6e0;"></div>
<div style="left:725.6px;top:276.5px;width:0.7px;height:11.3px;background:#cdd6e0;"></div>
<div style="left:776px;top:276.5px;width:0.7px;height:11.3px;background:#cdd6e0;"></div>
<div style="left:826.9px;top:276.5px;width:0.7px;height:11.3px;background:#cdd6e0;"></div>
<div class="t" style="top:280.90px;font-size:5.2px;line-height:5.2px;color:#1a1a1a;font-weight:normal;-webkit-text-stroke:0.18px currentColor;transform:scaleY(1.08);transform-origin:50% 50%;left:264.8px;">Descripci&#243;n</div>
<div class="t" style="top:280.90px;font-size:5.2px;line-height:5.2px;color:#1a1a1a;font-weight:normal;-webkit-text-stroke:0.18px currentColor;transform:scaleY(1.08);transform-origin:50% 50%;left:288.7px;width:300px;text-align:center;">Clave SAT</div>
<div class="t" style="top:280.90px;font-size:5.2px;line-height:5.2px;color:#1a1a1a;font-weight:normal;-webkit-text-stroke:0.18px currentColor;transform:scaleY(1.08);transform-origin:50% 50%;left:327px;width:300px;text-align:center;">Unidad SAT</div>
<div class="t" style="top:280.90px;font-size:5.2px;line-height:5.2px;color:#1a1a1a;font-weight:normal;-webkit-text-stroke:0.18px currentColor;transform:scaleY(1.08);transform-origin:50% 50%;left:365px;width:300px;text-align:center;">Clave</div>
<div class="t" style="top:280.90px;font-size:5.2px;line-height:5.2px;color:#1a1a1a;font-weight:normal;-webkit-text-stroke:0.18px currentColor;transform:scaleY(1.08);transform-origin:50% 50%;left:398px;width:300px;text-align:center;">Cantidad</div>
<div class="t" style="top:280.90px;font-size:5.2px;line-height:5.2px;color:#1a1a1a;font-weight:normal;-webkit-text-stroke:0.18px currentColor;transform:scaleY(1.08);transform-origin:50% 50%;left:564.8px;">Unidad</div>
<div class="t" style="top:280.90px;font-size:5.2px;line-height:5.2px;color:#1a1a1a;font-weight:normal;-webkit-text-stroke:0.18px currentColor;transform:scaleY(1.08);transform-origin:50% 50%;right:229.5px;text-align:right;">Precio Unitario</div>
<div class="t" style="top:280.90px;font-size:5.2px;line-height:5.2px;color:#1a1a1a;font-weight:normal;-webkit-text-stroke:0.18px currentColor;transform:scaleY(1.08);transform-origin:50% 50%;left:550.5px;width:300px;text-align:center;">Impuestos</div>
<div class="t" style="top:280.90px;font-size:5.2px;line-height:5.2px;color:#1a1a1a;font-weight:normal;-webkit-text-stroke:0.18px currentColor;transform:scaleY(1.08);transform-origin:50% 50%;left:601px;width:300px;text-align:center;">ObjImpuesto</div>
<div class="t" style="top:280.90px;font-size:5.2px;line-height:5.2px;color:#1a1a1a;font-weight:normal;-webkit-text-stroke:0.18px currentColor;transform:scaleY(1.08);transform-origin:50% 50%;left:655.1px;width:300px;text-align:center;">Descuento</div>
<div class="t" style="top:280.90px;font-size:5.2px;line-height:5.2px;color:#1a1a1a;font-weight:normal;-webkit-text-stroke:0.18px currentColor;transform:scaleY(1.08);transform-origin:50% 50%;left:710.1px;width:300px;text-align:center;">Importe</div>
<svg style="position:absolute;left:253px;top:290.3px" width="4" height="6" viewBox="0 0 4 6"><path d="M0.3 0.3 L3.7 3 L0.3 5.7Z" fill="#444"/></svg>
<div class="t" style="top:291.70px;font-size:5.2px;line-height:5.2px;color:#1a1a1a;font-weight:normal;-webkit-text-stroke:0.18px currentColor;transform:scaleY(1.08);transform-origin:50% 50%;left:263.9px;">Servicio administrativo</div>
<div class="t" style="top:291.70px;font-size:5.2px;line-height:5.2px;color:#1a1a1a;font-weight:normal;-webkit-text-stroke:0.18px currentColor;transform:scaleY(1.08);transform-origin:50% 50%;left:288.7px;width:300px;text-align:center;">84111506</div>
<div class="t" style="top:291.70px;font-size:5.2px;line-height:5.2px;color:#1a1a1a;font-weight:normal;-webkit-text-stroke:0.18px currentColor;transform:scaleY(1.08);transform-origin:50% 50%;left:327px;width:300px;text-align:center;">E48</div>
<div class="t" style="top:291.70px;font-size:5.2px;line-height:5.2px;color:#1a1a1a;font-weight:normal;-webkit-text-stroke:0.18px currentColor;transform:scaleY(1.08);transform-origin:50% 50%;left:365px;width:300px;text-align:center;">SERVICIO</div>
<div class="t" style="top:291.70px;font-size:5.2px;line-height:5.2px;color:#1a1a1a;font-weight:normal;-webkit-text-stroke:0.18px currentColor;transform:scaleY(1.08);transform-origin:50% 50%;left:398px;width:300px;text-align:center;">1</div>
<div class="t" style="top:291.70px;font-size:5.2px;line-height:5.2px;color:#1a1a1a;font-weight:normal;-webkit-text-stroke:0.18px currentColor;transform:scaleY(1.08);transform-origin:50% 50%;left:564.8px;">pieza</div>
<div class="t" style="top:291.70px;font-size:5.2px;line-height:5.2px;color:#1a1a1a;font-weight:normal;-webkit-text-stroke:0.18px currentColor;transform:scaleY(1.08);transform-origin:50% 50%;right:222.5px;text-align:right;">$25,862.07</div>
<div class="t" style="top:291.70px;font-size:5.2px;line-height:5.2px;color:#1a1a1a;font-weight:normal;-webkit-text-stroke:0.18px currentColor;transform:scaleY(1.08);transform-origin:50% 50%;left:550.5px;width:300px;text-align:center;">IVA 16%</div>
<div class="t" style="top:291.70px;font-size:5.2px;line-height:5.2px;color:#1a1a1a;font-weight:normal;-webkit-text-stroke:0.18px currentColor;transform:scaleY(1.08);transform-origin:50% 50%;left:601px;width:300px;text-align:center;">02</div>
<div class="t" style="top:291.70px;font-size:5.2px;line-height:5.2px;color:#1a1a1a;font-weight:normal;-webkit-text-stroke:0.18px currentColor;transform:scaleY(1.08);transform-origin:50% 50%;right:70.70000000000005px;text-align:right;">$0.00</div>
<div class="t" style="top:291.70px;font-size:5.2px;line-height:5.2px;color:#1a1a1a;font-weight:normal;-webkit-text-stroke:0.18px currentColor;transform:scaleY(1.08);transform-origin:50% 50%;right:18.799999999999955px;text-align:right;">$25,862.07</div>
<div style="left:248px;top:298.3px;width:630.6px;height:0.6px;background:#ededed;"></div>
<div style="left:248px;top:322.8px;width:630.6px;height:0.8px;background:#c9d5e2;"></div>
<div class="t" style="top:331.50px;font-size:5.2px;line-height:5.2px;color:#15428b;font-weight:normal;-webkit-text-stroke:0.18px currentColor;transform:scaleY(1.08);transform-origin:50% 50%;right:47px;text-align:right;">Subtotal :</div>
<div class="t" style="top:331.50px;font-size:5.2px;line-height:5.2px;color:#1a1a1a;font-weight:normal;-webkit-text-stroke:0.18px currentColor;transform:scaleY(1.08);transform-origin:50% 50%;right:18.799999999999955px;text-align:right;">$25,862.07</div>
<div class="t" style="top:340.00px;font-size:5.2px;line-height:5.2px;color:#15428b;font-weight:normal;-webkit-text-stroke:0.18px currentColor;transform:scaleY(1.08);transform-origin:50% 50%;right:47px;text-align:right;">Descuentos :</div>
<div class="t" style="top:340.00px;font-size:5.2px;line-height:5.2px;color:#1a1a1a;font-weight:normal;-webkit-text-stroke:0.18px currentColor;transform:scaleY(1.08);transform-origin:50% 50%;right:18.799999999999955px;text-align:right;">$0.00</div>
<div class="t" style="top:349.10px;font-size:5.2px;line-height:5.2px;color:#15428b;font-weight:normal;-webkit-text-stroke:0.18px currentColor;transform:scaleY(1.08);transform-origin:50% 50%;right:47px;text-align:right;">Total de Impuestos Retenidos :</div>
<div class="t" style="top:349.10px;font-size:5.2px;line-height:5.2px;color:#1a1a1a;font-weight:normal;-webkit-text-stroke:0.18px currentColor;transform:scaleY(1.08);transform-origin:50% 50%;right:18.799999999999955px;text-align:right;">$0.00</div>
<div class="t" style="top:357.50px;font-size:5.2px;line-height:5.2px;color:#15428b;font-weight:normal;-webkit-text-stroke:0.18px currentColor;transform:scaleY(1.08);transform-origin:50% 50%;right:47px;text-align:right;">Total de Impuestos Trasladados :</div>
<div class="t" style="top:357.50px;font-size:5.2px;line-height:5.2px;color:#1a1a1a;font-weight:normal;-webkit-text-stroke:0.18px currentColor;transform:scaleY(1.08);transform-origin:50% 50%;right:18.799999999999955px;text-align:right;">$4,137.93</div>
<div class="t" style="top:366.00px;font-size:5.2px;line-height:5.2px;color:#15428b;font-weight:normal;-webkit-text-stroke:0.18px currentColor;transform:scaleY(1.08);transform-origin:50% 50%;right:47px;text-align:right;">Total :</div>
<div class="t" style="top:366.00px;font-size:5.2px;line-height:5.2px;color:#1a1a1a;font-weight:normal;-webkit-text-stroke:0.18px currentColor;transform:scaleY(1.08);transform-origin:50% 50%;right:18.799999999999955px;text-align:right;">$30,000.00</div>
<div style="left:248px;top:380px;width:3px;height:0.8px;background:#99bde3;"></div>
<div style="left:312px;top:380px;width:566.4px;height:0.8px;background:#99bde3;"></div>
<div style="left:877.6px;top:380px;width:0.8px;height:44px;background:#99bde3;"></div>
<div class="t" style="top:377.82px;font-size:5.15px;line-height:5.15px;color:#1a1a1a;font-weight:normal;-webkit-text-stroke:0.18px currentColor;transform:scaleY(1.08);transform-origin:50% 50%;left:254px;">Datos del Comprobante</div>
<div style="left:252.2px;top:388px;width:0.8px;height:36px;background:#99bde3;"></div>
<div style="left:252.2px;top:388px;width:5px;height:0.8px;background:#99bde3;"></div>
<div style="left:293.3px;top:388px;width:580.3px;height:0.8px;background:#99bde3;"></div>
<div style="left:873.3px;top:388px;width:0.8px;height:36px;background:#99bde3;"></div>
<div class="t" style="top:385.82px;font-size:5.15px;line-height:5.15px;color:#1a1a1a;font-weight:normal;-webkit-text-stroke:0.18px currentColor;transform:scaleY(1.08);transform-origin:50% 50%;left:258.9px;">Comprobante</div>
<div class="t" style="top:395.29px;font-size:5.22px;line-height:5.22px;color:#15428b;font-weight:normal;-webkit-text-stroke:0.18px currentColor;transform:scaleY(1.08);transform-origin:50% 50%;right:591.7px;text-align:right;">Moneda :</div>
<div class="t" style="top:395.29px;font-size:5.22px;line-height:5.22px;color:#1a1a1a;font-weight:normal;-webkit-text-stroke:0.18px currentColor;transform:scaleY(1.08);transform-origin:50% 50%;left:305.8px;">MXN</div>
<div class="t" style="top:403.89px;font-size:5.22px;line-height:5.22px;color:#15428b;font-weight:normal;-webkit-text-stroke:0.18px currentColor;transform:scaleY(1.08);transform-origin:50% 50%;right:591.7px;text-align:right;">Tipo de cambio :</div>
<div class="t" style="top:412.49px;font-size:5.22px;line-height:5.22px;color:#15428b;font-weight:normal;-webkit-text-stroke:0.18px currentColor;transform:scaleY(1.08);transform-origin:50% 50%;right:591.7px;text-align:right;">M&#233;todo de pago :</div>
<div class="t" style="top:412.49px;font-size:5.22px;line-height:5.22px;color:#1a1a1a;font-weight:normal;-webkit-text-stroke:0.18px currentColor;transform:scaleY(1.08);transform-origin:50% 50%;left:305.8px;">PPD - Pago en parcialidades o diferido</div>
<div class="t" style="top:421.19px;font-size:5.22px;line-height:5.22px;color:#15428b;font-weight:normal;-webkit-text-stroke:0.18px currentColor;transform:scaleY(1.08);transform-origin:50% 50%;right:591.7px;text-align:right;">Forma de pago :</div>
<div class="t" style="top:421.19px;font-size:5.22px;line-height:5.22px;color:#1a1a1a;font-weight:normal;-webkit-text-stroke:0.18px currentColor;transform:scaleY(1.08);transform-origin:50% 50%;left:305.8px;">99 - Por definir</div>
<div style="left:248px;top:424px;width:640px;height:53.5px;background:#666;"></div>
<svg style="position:absolute;left:0;top:0" width="896" height="495" viewBox="0 0 896 495"><rect x="2.9" y="47.9" width="12.8" height="19.6" fill="none" stroke="#ff1a1a" stroke-width="2"/><path d="M16.5 68 L241 127.9" stroke="#f01818" stroke-width="1.7"/><path d="M247.4 129.5 L239.38 130.08 L240.72 125.06 Z" fill="#f01818"/></svg>
</body></html>
